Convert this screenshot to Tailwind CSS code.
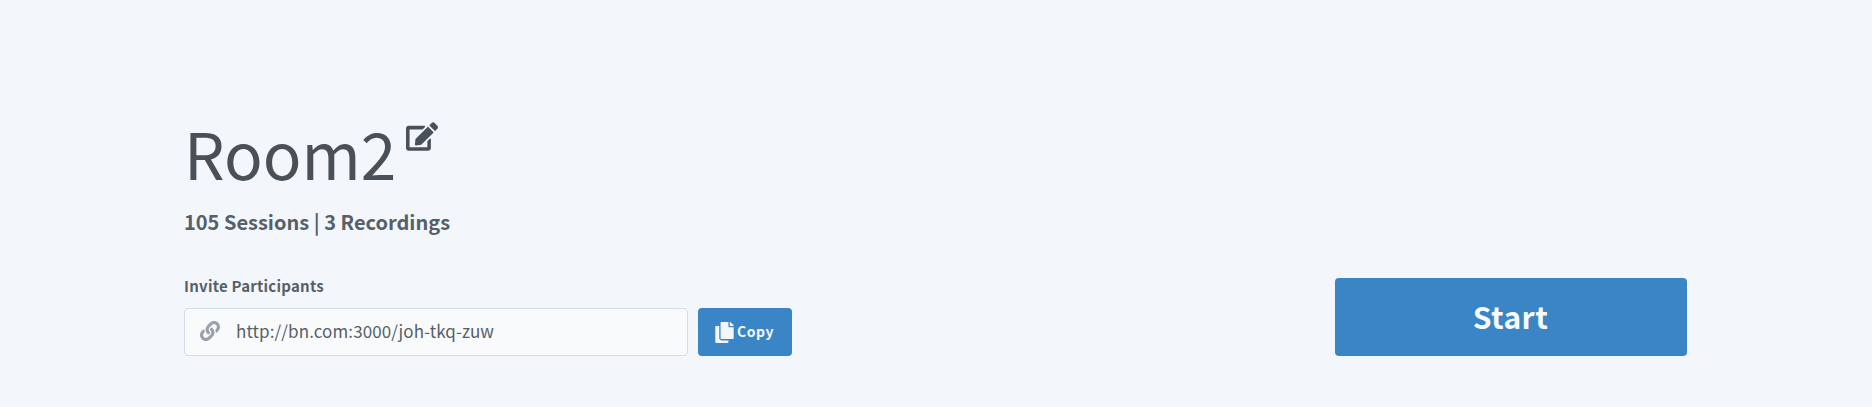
<!DOCTYPE html>
<html lang="en">
<head>
<meta charset="utf-8">
<title>Room2</title>
<script src="https://cdn.jsdelivr.net/npm/@tailwindcss/browser@4"></script>
</head>
<body class="h-[407px] overflow-hidden bg-[#f3f7fc] font-['Noto_Sans_CJK_SC','Noto_Sans',sans-serif] text-[#495057]">
<main class="flex h-[356px] items-end justify-between pr-[185.5px] pl-[184px]">
  <section class="flex flex-col items-start">
    <div class="flex items-start">
      <h1 class="h-[80px] text-[64px] leading-[66px] whitespace-nowrap">Room2</h1>
      <svg class="mt-[3px] ml-[10px] h-[29px] w-[32px]" viewBox="0 0 576 512" fill="currentColor"><path d="M402.600 83.200l90.200 90.200c3.800 3.800 3.800 10 0 13.800L274.400 405.600l-92.800 10.300c-12.400 1.400-22.900-9.100-21.500-21.500l10.300-92.800L388.800 83.200c3.800-3.800 10-3.800 13.800 0zm162-22.900l-48.800-48.800c-15.200-15.200-39.900-15.200-55.200 0l-35.400 35.400c-3.800 3.800-3.800 10 0 13.800l90.200 90.200c3.800 3.800 10 3.800 13.800 0l35.400-35.400c15.200-15.300 15.200-40 0-55.200zM384 346.200V448H64V128h229.800c3.200 0 6.200-1.300 8.500-3.500l40-40c7.600-7.600 2.200-20.500-8.500-20.500H48C21.500 64 0 85.500 0 112v352c0 26.500 21.500 48 48 48h352c26.500 0 48-21.500 48-48V306.200c0-10.700-12.900-16-20.500-8.500l-40 40c-2.200 2.300-3.500 5.300-3.500 8.500z"/></svg>
    </div>
    <p class="mt-[9px] h-7 text-[20px] leading-7 font-bold whitespace-nowrap text-[#566068]">105 Sessions | 3 Recordings</p>
    <label for="invite" class="mt-[40px] h-5 text-[15px] leading-5 font-bold tracking-[0.23px] whitespace-nowrap text-[#566068]">Invite Participants</label>
    <div class="mt-[12px] flex gap-[10px]">
      <div id="invite" class="flex h-12 w-[504px] items-center rounded-[4px] border border-[#d3dde7] bg-[#f9fafb] pl-[15px]">
        <svg class="mb-[2px] h-5 w-5 text-[#9aa0ac]" viewBox="0 0 512 512" fill="currentColor"><path d="M326.612 185.391c59.747 59.809 58.927 155.698.36 214.590-.110.120-.240.250-.360.370l-67.200 67.200c-59.270 59.270-155.699 59.262-214.960 0-59.270-59.260-59.270-155.700 0-214.960l37.106-37.106c9.840-9.840 26.786-3.300 27.294 10.606.648 17.722 3.826 35.527 9.690 52.721 1.986 5.822.567 12.262-3.783 16.612l-13.087 13.087c-28.026 28.026-28.905 73.660-1.155 101.960 28.024 28.579 74.086 28.749 102.325.510l67.200-67.190c28.191-28.191 28.073-73.757 0-101.830-3.701-3.694-7.429-6.564-10.341-8.569a16.037 16.037 0 0 1-6.947-12.606c-.396-10.567 3.348-21.456 11.698-29.806l21.054-21.055c5.521-5.521 14.182-6.199 20.584-1.731a152.482 152.482 0 0 1 20.522 17.197zM467.547 44.449c-59.261-59.262-155.690-59.270-214.960 0l-67.200 67.200c-.120.120-.250.250-.360.370-58.566 58.892-59.387 154.781.360 214.590a152.454 152.454 0 0 0 20.521 17.196c6.402 4.468 15.064 3.789 20.584-1.731l21.054-21.055c8.350-8.350 12.094-19.239 11.698-29.806a16.037 16.037 0 0 0-6.947-12.606c-2.912-2.005-6.640-4.875-10.341-8.569-28.073-28.073-28.191-73.639 0-101.830l67.200-67.190c28.239-28.239 74.300-28.069 102.325.510 27.750 28.300 26.872 73.934-1.155 101.960l-13.087 13.087c-4.350 4.350-5.769 10.790-3.783 16.612 5.864 17.194 9.042 34.999 9.690 52.721.509 13.906 17.454 20.446 27.294 10.606l37.106-37.106c59.271-59.259 59.271-155.699.001-214.959z"/></svg>
        <span class="mb-[2px] ml-4 text-[17px] leading-6 tracking-[0.1px] whitespace-nowrap text-[#566068]">http://bn.com:3000/joh-tkq-zuw</span>
      </div>
      <button class="flex h-12 w-[94px] items-center justify-center gap-[3px] rounded-[4px] bg-[#3a85c6] pr-px text-[14px] font-bold tracking-[0.5px] text-[#f3f7fc]">
        <svg class="h-[21px] w-[19px]" viewBox="0 0 448 512" fill="currentColor"><path d="M320 448v40c0 13.255-10.745 24-24 24H24c-13.255 0-24-10.745-24-24V120c0-13.255 10.745-24 24-24h72v296c0 30.879 25.121 56 56 56h168zm0-344V0H152c-13.255 0-24 10.745-24 24v368c0 13.255 10.745 24 24 24h272c13.255 0 24-10.745 24-24V128H344c-13.200 0-24-10.800-24-24zm120.971-31.029L375.029 7.029A24 24 0 0 0 358.059 0H352v96h96v-6.059a24 24 0 0 0-7.029-16.970z"/></svg>
        <span class="mb-[2px]">Copy</span>
      </button>
    </div>
  </section>
  <button class="flex h-[78px] w-[352px] items-center justify-center rounded-[4px] bg-[#3a85c6] text-[30px] font-bold tracking-[0.5px] text-[#f9fafc]"><span class="mb-[2px]">Start</span></button>
</main>
</body>
</html>
